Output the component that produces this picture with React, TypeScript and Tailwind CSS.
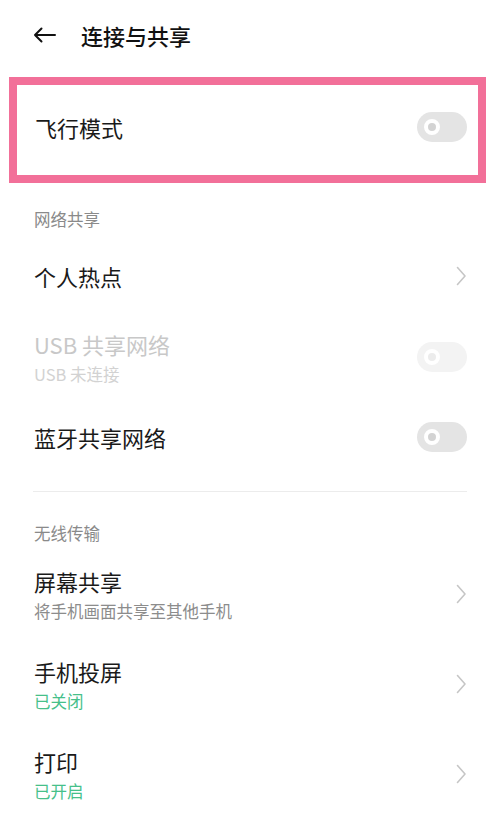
const font = { fontFamily: '"Noto Sans CJK SC", "Noto Sans", sans-serif' }

function Chevron() {
  return (
    <svg width="12" height="20" viewBox="0 0 12 20" fill="none" className="shrink-0">
      <path d="M2.5 1.5 L10 10 L2.5 18.5" stroke="#c6c6c6" strokeWidth="1.6" strokeLinecap="round" strokeLinejoin="round" />
    </svg>
  )
}

function Toggle({ disabled = false }: { disabled?: boolean }) {
  return (
    <div
      className={`w-[50px] h-[30px] rounded-full flex items-center pl-[7px] shrink-0 ${
        disabled ? 'bg-[#f3f3f3]' : 'bg-[#e4e4e4]'
      }`}
    >
      <div
        className={`w-[16px] h-[16px] rounded-full border-[4px] border-white ${
          disabled ? 'bg-[#ececec]' : 'bg-[#d3d3d3]'
        }`}
      />
    </div>
  )
}

function SectionHeader({ title, h, pb }: { title: string; h: string; pb: string }) {
  return (
    <div className={`${h} ${pb} px-[34px] flex items-end`}>
      <span className="text-[16.5px] leading-[20px] text-[#8a8a8a]">{title}</span>
    </div>
  )
}

function Row({
  title,
  sub,
  subColor = 'text-[#8c8c8c]',
  titleColor = 'text-[#1a1a1a]',
  right,
  h,
}: {
  title: string
  sub?: string
  subColor?: string
  titleColor?: string
  right: React.ReactNode
  h: string
}) {
  return (
    <div className={`${h} pl-[34px] pr-[33px] flex items-center justify-between`}>
      <div className="flex flex-col">
        <span className={`text-[22px] leading-[30px] ${titleColor}`}>{title}</span>
        {sub && <span className={`text-[16.5px] leading-[22px] mt-[4px] ${subColor}`}>{sub}</span>}
      </div>
      {right}
    </div>
  )
}

export default function App() {
  return (
    <div className="w-[500px] h-[838px] bg-white overflow-hidden" style={font}>
      {/* header */}
      <div className="h-[72px] flex items-center pl-[33px] pb-[2px]">
        <svg width="23" height="16" viewBox="0 0 23 16" fill="none">
          <path d="M22 8 H2 M8.5 1.5 L2 8 L8.5 14.5" stroke="#111" strokeWidth="2" strokeLinecap="round" strokeLinejoin="round" />
        </svg>
        <span className="ml-[25px] text-[22px] leading-[30px] font-medium text-[#111]">连接与共享</span>
      </div>

      {/* highlighted airplane mode */}
      <div className="mt-[5px] ml-[9px] mr-[14px] h-[106px] border-[8px] border-[#f27099] flex items-center justify-between pl-[18px] pr-[11px] pb-[6px]">
        <span className="text-[22px] leading-[30px] text-[#1a1a1a]">飞行模式</span>
        <Toggle />
      </div>

      <SectionHeader title="网络共享" h="h-[57px]" pb="pb-[11px]" />
      <Row h="h-[72px]" title="个人热点" right={<Chevron />} />
      <Row
        h="h-[90px]"
        title="USB 共享网络"
        titleColor="text-[#c8c8c8]"
        sub="USB 未连接"
        subColor="text-[#d2d2d2]"
        right={<Toggle disabled />}
      />
      <Row h="h-[70px]" title="蓝牙共享网络" right={<Toggle />} />

      <div className="mt-[19px] mx-[33px] h-px bg-[#ececec]" />

      <SectionHeader title="无线传输" h="h-[57px]" pb="pb-[6px]" />
      <Row h="h-[90px]" title="屏幕共享" sub="将手机画面共享至其他手机" right={<Chevron />} />
      <Row h="h-[90px]" title="手机投屏" sub="已关闭" subColor="text-[#46c08a]" right={<Chevron />} />
      <Row h="h-[90px]" title="打印" sub="已开启" subColor="text-[#46c08a]" right={<Chevron />} />
    </div>
  )
}
